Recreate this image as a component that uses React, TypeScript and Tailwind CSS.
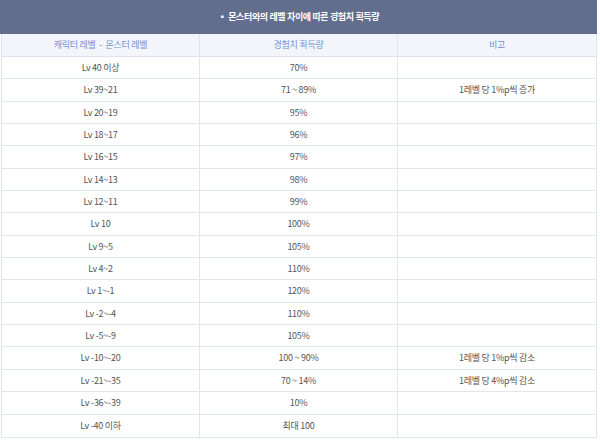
import React from 'react'

const rows: [string, string, string][] = [
  ['Lv 40 이상', '70%', ''],
  ['Lv 39~21', '71 ~ 89%', '1레벨 당 1%p씩 증가'],
  ['Lv 20~19', '95%', ''],
  ['Lv 18~17', '96%', ''],
  ['Lv 16~15', '97%', ''],
  ['Lv 14~13', '98%', ''],
  ['Lv 12~11', '99%', ''],
  ['Lv 10', '100%', ''],
  ['Lv 9~5', '105%', ''],
  ['Lv 4~2', '110%', ''],
  ['Lv 1~-1', '120%', ''],
  ['Lv -2~-4', '110%', ''],
  ['Lv -5~-9', '105%', ''],
  ['Lv -10~-20', '100 ~ 90%', '1레벨 당 1%p씩 감소'],
  ['Lv -21~-35', '70 ~ 14%', '1레벨 당 4%p씩 감소'],
  ['Lv -36~-39', '10%', ''],
  ['Lv -40 이하', '최대 100', ''],
]

export default function App() {
  return (
    <div
      className="w-[600px] h-[444px] bg-white overflow-hidden"
      style={{ fontFamily: '"Noto Sans CJK KR", "Noto Sans", sans-serif' }}
    >
      <div className="w-[597px] h-[34px] bg-[#636e8f] flex items-center justify-center text-white text-[9px] font-bold tracking-[-0.04em]">
        ▪ 몬스터와의 레벨 차이에 따른 경험치 획득량
      </div>
      <div className="ml-[1px] w-[596px] border-x border-b border-[#dfe4ef]">
        <div className="grid grid-cols-[198px_198px_1fr] h-[23px] bg-[#f4f5fb] border-b border-[#dbe2f1] text-[#6f93d4] text-[9px] tracking-[-0.03em]">
          <div className="flex items-center justify-center border-r border-[#dfe4ef]">캐릭터 레벨 &nbsp;-&nbsp; 몬스터 레벨</div>
          <div className="flex items-center justify-center border-r border-[#dfe4ef]">경험치 획득량</div>
          <div className="flex items-center justify-center">비고</div>
        </div>
        {rows.map(([lv, exp, note], i) => (
          <div
            key={lv}
            className={`grid grid-cols-[198px_198px_1fr] h-[22.35px] text-[#555555] text-[9px] tracking-[-0.03em] ${i < rows.length - 1 ? 'border-b border-[#e1e6f0]' : ''}`}
          >
            <div className="flex items-center justify-center border-r border-[#dfe4ef]">{lv}</div>
            <div className="flex items-center justify-center border-r border-[#dfe4ef]">{exp}</div>
            <div className="flex items-center justify-center">{note}</div>
          </div>
        ))}
      </div>
    </div>
  )
}
